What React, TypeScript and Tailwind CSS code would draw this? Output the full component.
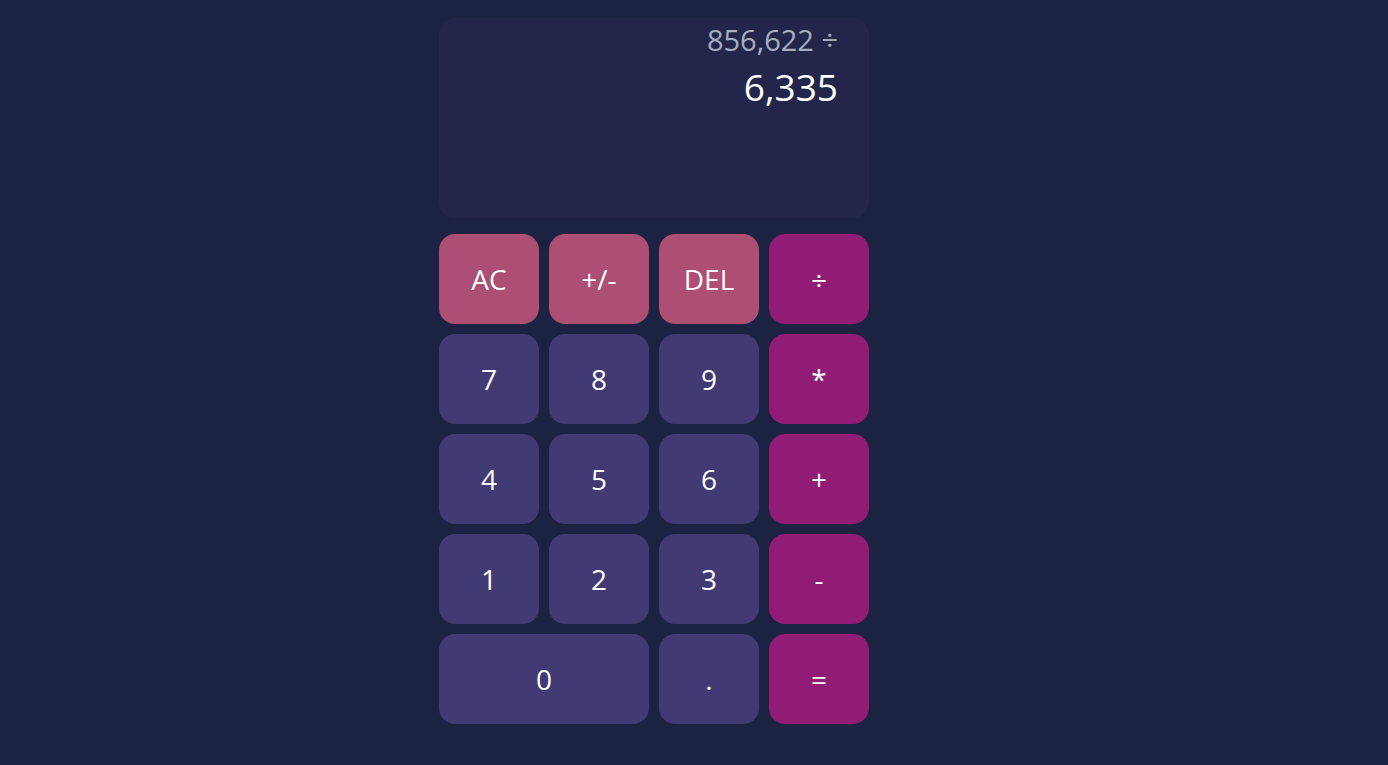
import React, {useState} from "react";

const keys: {label: string, kind: "fn" | "num" | "op", wide?: boolean}[] = [
    {label: "AC", kind: "fn"},
    {label: "+/-", kind: "fn"},
    {label: "DEL", kind: "fn"},
    {label: "÷", kind: "op"},
    {label: "7", kind: "num"},
    {label: "8", kind: "num"},
    {label: "9", kind: "num"},
    {label: "*", kind: "op"},
    {label: "4", kind: "num"},
    {label: "5", kind: "num"},
    {label: "6", kind: "num"},
    {label: "+", kind: "op"},
    {label: "1", kind: "num"},
    {label: "2", kind: "num"},
    {label: "3", kind: "num"},
    {label: "-", kind: "op"},
    {label: "0", kind: "num", wide: true},
    {label: ".", kind: "num"},
    {label: "=", kind: "op"},
];

const kindClass = {
    fn: "bg-[#ad4e74]",
    num: "bg-[#413a73]",
    op: "bg-[#911c74]",
};

const App = () => {
    const [prev] = useState("856,622 ÷");
    const [current] = useState("6,335");

    return (
        <div className="min-h-screen w-full bg-[#1c2241] font-['Open_Sans',sans-serif] text-white">
            <div className="flex justify-center pr-[80px] pt-[18px]">
                <div className="w-[430px]">
                    {/* display */}
                    <div className="h-[200px] rounded-[16px] bg-[#23264a] pr-[31px] pt-[2px] text-right">
                        <div className="text-[29px] leading-[40px] text-[#a6adbf]">{prev}</div>
                        <div className="mt-[2px] text-[37px] leading-[50px] text-white">{current}</div>
                    </div>

                    <div className="mt-[16px] grid grid-cols-4 gap-[10px]">
                        {keys.map((k) => (
                            <button
                                key={k.label}
                                className={
                                    "h-[90px] rounded-[16px] text-[28px] text-white " +
                                    kindClass[k.kind] +
                                    (k.wide ? " col-span-2" : "")
                                }
                            >
                                {k.label}
                            </button>
                        ))}
                    </div>
                </div>
            </div>
        </div>
    )
}

export default App
